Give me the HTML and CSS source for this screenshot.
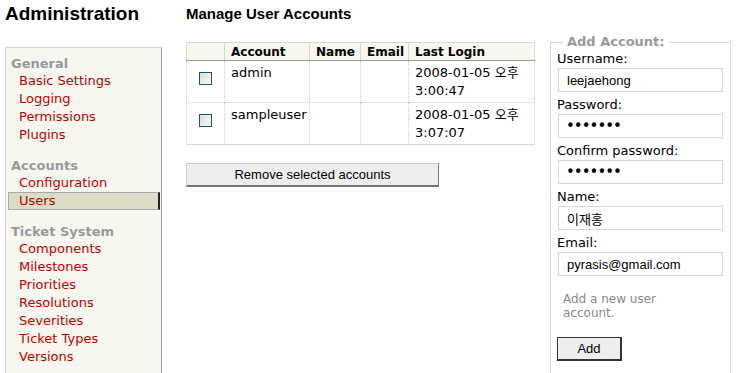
FILE: index.html
```html
<html>
    <head>
        <title>Administration</title>
        <link rel="stylesheet" href="styles.css">
    </head>
    <body>
        <div class="page">
            <div class="leftColumn">
                <h1>Administration</h1>
                <div class="tabs">
                    <div class="group">
                        <div class="groupTitle">General</div>
                        <a class="tab" href="#">Basic Settings</a>
                        <a class="tab" href="#">Logging</a>
                        <a class="tab" href="#">Permissions</a>
                        <a class="tab" href="#">Plugins</a>
                    </div>
                    <div class="group">
                        <div class="groupTitle">Accounts</div>
                        <a class="tab" href="#">Configuration</a>
                        <a class="tab active" href="#">Users</a>
                    </div>
                    <div class="group">
                        <div class="groupTitle">Ticket System</div>
                        <a class="tab" href="#">Components</a>
                        <a class="tab" href="#">Milestones</a>
                        <a class="tab" href="#">Priorities</a>
                        <a class="tab" href="#">Resolutions</a>
                        <a class="tab" href="#">Severities</a>
                        <a class="tab" href="#">Ticket Types</a>
                        <a class="tab" href="#">Versions</a>
                    </div>
                </div>
            </div>

            <div class="mainColumn">
                <h2>Manage User Accounts</h2>
                <table class="listing">
                    <tr>
                        <th class="selCol"></th>
                        <th class="accountCol">Account</th>
                        <th class="nameCol">Name</th>
                        <th class="emailCol">Email</th>
                        <th class="loginCol">Last Login</th>
                    </tr>
                    <tr>
                        <td class="sel"><input type="checkbox" class="check"></td>
                        <td>admin</td>
                        <td></td>
                        <td></td>
                        <td>2008-01-05 오후<br>3:00:47</td>
                    </tr>
                    <tr>
                        <td class="sel"><input type="checkbox" class="check"></td>
                        <td>sampleuser</td>
                        <td></td>
                        <td></td>
                        <td>2008-01-05 오후<br>3:07:07</td>
                    </tr>
                </table>
                <button type="button" class="removeButton">Remove selected accounts</button>
            </div>

            <fieldset class="addBox">
                <legend>Add Account:</legend>
                <div class="field">
                    <label>Username:</label>
                    <input type="text" class="textInput" value="leejaehong">
                </div>
                <div class="field">
                    <label>Password:</label>
                    <input type="password" class="textInput secret" value="1234567">
                </div>
                <div class="field">
                    <label>Confirm password:</label>
                    <input type="password" class="textInput secret" value="1234567">
                </div>
                <div class="field">
                    <label>Name:</label>
                    <input type="text" class="textInput" value="이재홍">
                </div>
                <div class="field">
                    <label>Email:</label>
                    <input type="text" class="textInput" value="pyrasis@gmail.com">
                </div>
                <p class="hint">Add a new user account.</p>
                <button type="button" class="addButton">Add</button>
            </fieldset>
        </div>
    </body>
</html>
```

FILE: styles.css
```css
body {
    margin: 0;
    font-family: "DejaVu Sans", Verdana, "Noto Sans CJK KR", sans-serif;
    font-size: 13px;
    color: #000;
    background: #fff;
    overflow: hidden;
}
.page {
    display: flex;
    align-items: flex-start;
}
.leftColumn {
    margin-left: 5px;
    width: 157px;
}
h1 {
    margin: 0 0 19px 0;
    font-family: "Liberation Sans", Arial, sans-serif;
    font-size: 19px;
    line-height: 28px;
    font-weight: bold;
}
.tabs {
    background: #f7f7f0;
    border-top: 1px solid #d7d7d7;
    border-left: 1px solid #d7d7d7;
    border-right: 1px solid #999;
    padding-top: 7px;
    min-height: 340px;
}
.group {
    margin-bottom: 13px;
}
.groupTitle {
    padding-left: 5px;
    color: #999;
    font-weight: bold;
    line-height: 17px;
}
.tab {
    display: block;
    margin: 0 1px 0 2px;
    padding-left: 10px;
    color: #b00;
    text-decoration: none;
    line-height: 18px;
    border: 1px solid transparent;
    border-width: 0 2px 0 1px;
}
.tab.active {
    background: #dddcc8;
    border: 1px solid #aaa;
    border-right: 2px solid #222;
    line-height: 16px;
}
.mainColumn {
    margin-left: 24px;
    width: 348px;
}
h2 {
    margin: 0 0 14px 0;
    font-family: "Liberation Sans", Arial, sans-serif;
    font-size: 15px;
    line-height: 28px;
    font-weight: bold;
}
.listing {
    width: 348px;
    border-collapse: collapse;
    table-layout: fixed;
    font-size: 13px;
}
.listing th {
    box-sizing: border-box;
    background: #f7f7f0;
    border: 1px solid #d7d7d7;
    border-bottom: 1px solid #999;
    text-align: left;
    font-size: 12px;
    font-weight: bold;
    padding: 0 6px;
    height: 18px;
    line-height: 16px;
}
.listing td {
    border: 1px dotted #ccc;
    vertical-align: top;
    padding: 3px 6px 2px 6px;
    line-height: 18px;
    white-space: nowrap;
}
.listing tr:last-child td {
    border-bottom: 1px solid #d7d7d7;
}
.selCol { width: 38px; }
.accountCol { width: 85px; }
.nameCol { width: 51px; }
.emailCol { width: 48px; }
.loginCol { width: 126px; }
.listing td.sel {
    text-align: center;
    padding-top: 6px;
}
.check {
    appearance: none;
    -webkit-appearance: none;
    width: 13px;
    height: 13px;
    margin: 5px 0 0 0;
    border: 1px solid #1c5180;
    background: linear-gradient(135deg, #dcdcd7, #fafaf8);
}
.removeButton {
    display: block;
    margin-top: 18px;
    width: 253px;
    height: 24px;
    background: #eee;
    border: 1px solid #ccc;
    border-right-color: #777;
    border-bottom: 2px solid #777;
    font-family: "Liberation Sans", Arial, sans-serif;
    font-size: 13px;
    color: #000;
    padding: 0;
}
.addBox {
    margin: 34px 0 0 16px;
    width: 167px;
    min-height: 360px;
    border: 1px solid #d7d7d7;
    border-bottom: none;
    padding: 0 6px 0 6px;
}
.addBox legend {
    color: #999;
    font-weight: bold;
    padding: 0 4px;
    margin-left: 6px;
    line-height: 16px;
}
.field {
    margin-bottom: 4px;
}
.field label {
    display: block;
    line-height: 18px;
}
.textInput {
    display: block;
    margin-left: 1px;
    width: 165px;
    height: 24px;
    box-sizing: border-box;
    border: 1px solid #d7d7d7;
    padding: 0 0 0 8px;
    font-family: "Liberation Sans", Arial, "Noto Sans CJK KR", sans-serif;
    font-size: 13px;
    color: #000;
}
.textInput.secret {
    font-family: "DejaVu Sans", sans-serif;
    font-size: 15px;
    letter-spacing: -1px;
    padding-left: 7px;
}
.hint {
    margin: 16px 0 0 6px;
    width: 125px;
    color: #888;
    font-size: 12px;
    line-height: 14px;
}
.addButton {
    display: block;
    margin-top: 17px;
    width: 65px;
    height: 24px;
    background: #eee;
    border: 2px solid #333;
    border-width: 1px 2px 2px 1px;
    font-family: "Liberation Sans", Arial, sans-serif;
    font-size: 13px;
    color: #000;
    padding: 0;
}
```
